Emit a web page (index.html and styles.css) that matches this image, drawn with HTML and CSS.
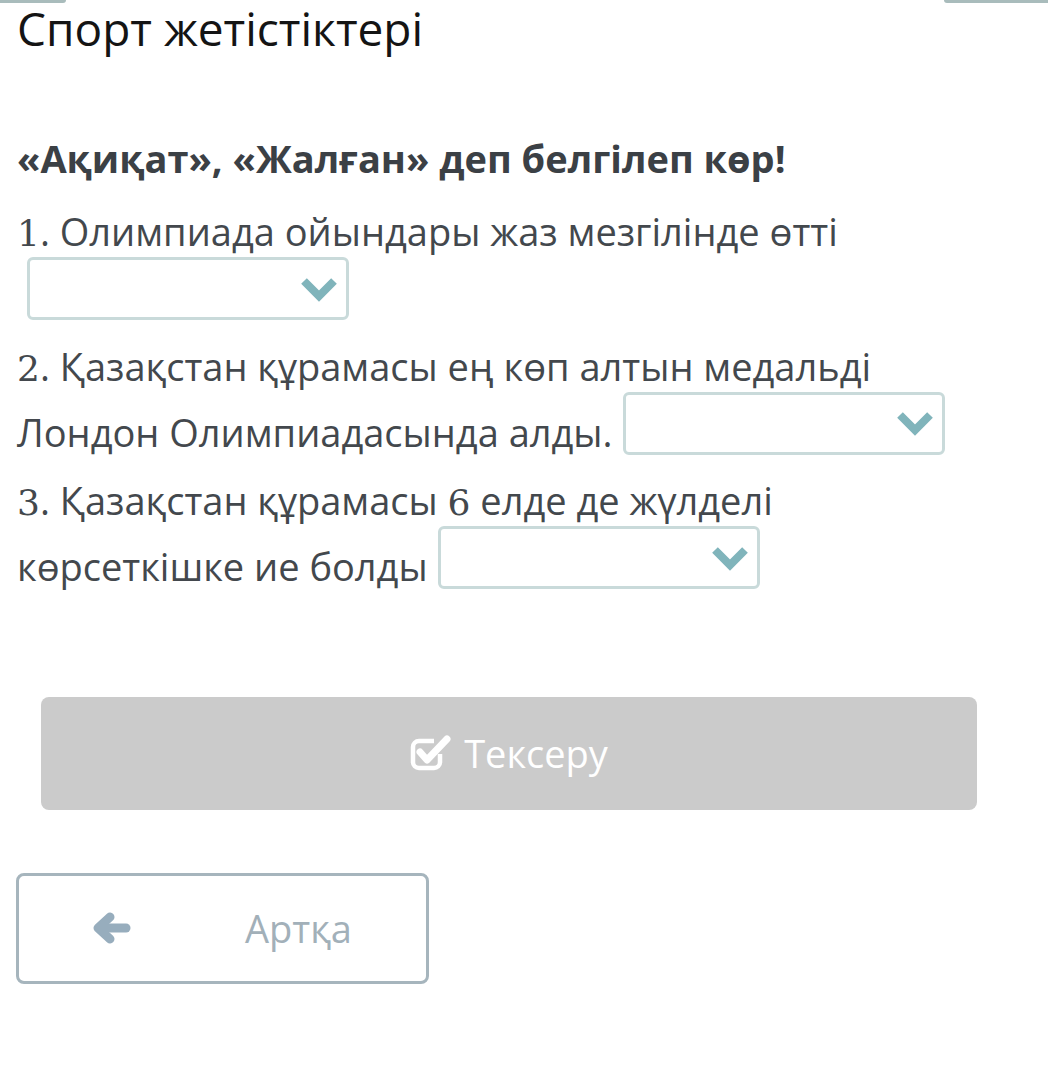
FILE: index.html
```html
<!DOCTYPE html>
<html lang="kk">
<head>
<meta charset="utf-8">
<title>Спорт жетістіктері</title>
<link rel="stylesheet" href="styles.css">
</head>
<body>
<div class="topbar"><span class="edge edge-left"></span><span class="edge edge-right"></span></div>
<main class="page">
  <h1 class="title">Спорт жетістіктері</h1>
  <h2 class="task">«Ақиқат», «Жалған» деп белгілеп көр!</h2>
  <p class="q"><span class="num">1</span>. Олимпиада ойындары жаз мезгілінде өтті<span class="sel"><svg class="chev" viewBox="0 0 36 26"><polyline points="3,5 18,20 33,5"/></svg></span></p>
  <p class="q"><span class="num">2</span>. Қазақстан құрамасы ең көп алтын медальді Лондон Олимпиадасында алды.<span class="sel"><svg class="chev" viewBox="0 0 36 26"><polyline points="3,5 18,20 33,5"/></svg></span></p>
  <p class="q"><span class="num">3</span>. Қазақстан құрамасы <span class="num">6</span> елде де жүлделі көрсеткішке ие болды<span class="sel"><svg class="chev" viewBox="0 0 36 26"><polyline points="3,5 18,20 33,5"/></svg></span></p>
  <button class="check-btn" type="button">
    <svg class="check-ico" viewBox="0 0 42 38"><path class="box" d="M30 21 V29 A6 6 0 0 1 24 35 H9 A6 6 0 0 1 3 29 V14 A6 6 0 0 1 9 8 H24"/><polyline class="tick" points="10,19 17,27 37,6"/></svg>
    <span>Тексеру</span>
  </button>
  <button class="back-btn" type="button">
    <svg class="arrow-ico" viewBox="0 0 38 32"><polyline points="17,5 5,16 17,27"/><line x1="7" y1="16" x2="33" y2="16"/></svg>
    <span>Артқа</span>
  </button>
</main>
</body>
</html>
```
FILE: styles.css
```css
html, body {
  margin: 0;
  padding: 0;
  background: #ffffff;
}
body {
  font-family: "Open Sans", "Noto Sans", sans-serif;
  color: #43484d;
}
.topbar {
  display: flex;
  justify-content: space-between;
  height: 3px;
}
.edge {
  display: block;
  height: 3px;
  background: #a9bcbc;
}
.edge-left {
  width: 66px;
  border-radius: 0 0 4px 0;
}
.edge-right {
  width: 104px;
  border-radius: 0 0 0 4px;
}
.page {
  padding: 0 71px 0 17px;
}
.title {
  margin: 2px 0 0;
  font-size: 46px;
  line-height: 46px;
  font-weight: 400;
  color: #141414;
}
.task {
  margin: 88px 0 0;
  font-size: 38px;
  line-height: 38px;
  font-weight: 700;
  color: #3b4045;
}
.q {
  margin: 0 0 17px;
  font-size: 38px;
  line-height: 52px;
  color: #43484d;
}
.task + .q {
  margin-top: 28px;
}
.num {
  font-family: "DejaVu Serif", "Liberation Serif", serif;
  font-size: 36px;
  line-height: 1;
}
.sel {
  box-sizing: border-box;
  display: inline-flex;
  align-items: center;
  justify-content: flex-end;
  width: 322px;
  height: 63px;
  margin-left: 10px;
  padding-right: 9px;
  border: 3px solid #c9dada;
  border-radius: 6px;
  background: #fff;
  vertical-align: 10px;
}
.chev {
  width: 36px;
  height: 26px;
  fill: none;
  stroke: #80b4bb;
  stroke-width: 8;
  stroke-linejoin: miter;
}
.check-btn {
  display: flex;
  align-items: center;
  justify-content: center;
  gap: 12px;
  box-sizing: border-box;
  width: 936px;
  height: 113px;
  margin: 105px 0 0 24px;
  border: 0;
  border-radius: 8px;
  background: #cbcbcb;
  color: #ffffff;
  font-family: "Open Sans", "Noto Sans", sans-serif;
  font-size: 38px;
  padding: 0;
}
.check-ico {
  width: 42px;
  height: 38px;
  margin-top: -2px;
}
.check-ico .box {
  fill: none;
  stroke: #ffffff;
  stroke-width: 4.5;
}
.check-ico .tick {
  fill: none;
  stroke: #ffffff;
  stroke-width: 7;
  stroke-linejoin: round;
  stroke-linecap: round;
}
.back-btn {
  display: flex;
  align-items: center;
  justify-content: center;
  gap: 114px;
  box-sizing: border-box;
  width: 413px;
  height: 111px;
  margin: 63px 0 0 -1px;
  border: 3px solid #a6b5bd;
  border-radius: 8px;
  background: #ffffff;
  color: #a2b0b9;
  font-family: "Open Sans", "Noto Sans", sans-serif;
  font-size: 38px;
  padding: 0;
}
.arrow-ico {
  width: 38px;
  height: 32px;
  fill: none;
  stroke: #97adbd;
  stroke-width: 9;
  stroke-linecap: round;
  stroke-linejoin: round;
}
```
